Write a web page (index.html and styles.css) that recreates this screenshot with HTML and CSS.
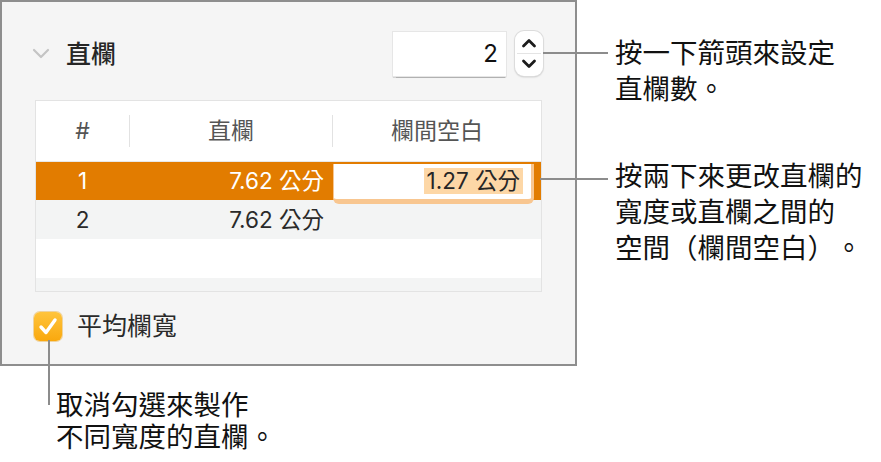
FILE: index.html
```html
<!DOCTYPE html>
<html lang="zh-Hant">
<head>
  <meta charset="UTF-8" />
  <title>直欄</title>
  <link rel="stylesheet" href="styles.css">
</head>
<body>
  <div class="figure">
    <div class="top">
      <section class="panel">
        <div class="panel-head">
          <svg class="disclosure" width="18" height="11" viewBox="0 0 18 11"><path d="M2 2 L9 9 L16 2" fill="none" stroke="#c4c4c4" stroke-width="2.2" stroke-linecap="round" stroke-linejoin="round"/></svg>
          <h2 class="panel-title">直欄</h2>
          <div class="count-field">2</div>
          <div class="stepper">
            <svg width="28" height="45" viewBox="0 0 28 45">
              <line x1="2" y1="22.5" x2="26" y2="22.5" stroke="#e4e4e4" stroke-width="1"/>
              <path d="M8.5 15 L14 9.5 L19.5 15" fill="none" stroke="#1c1c1c" stroke-width="2.8" stroke-linecap="round" stroke-linejoin="round"/>
              <path d="M8.5 30 L14 35.5 L19.5 30" fill="none" stroke="#1c1c1c" stroke-width="2.8" stroke-linecap="round" stroke-linejoin="round"/>
            </svg>
          </div>
        </div>

        <div class="columns-table">
          <div class="row head">
            <div class="cell num"><span>#</span></div>
            <div class="cell sep"><span>直欄</span></div>
            <div class="cell sep"><span>欄間空白</span></div>
          </div>
          <div class="row selected">
            <div class="cell num">1</div>
            <div class="cell val">7.62 公分</div>
            <div class="cell edit-cell">
              <div class="edit-box"><span class="hilite">1.27 公分</span></div>
            </div>
          </div>
          <div class="row alt">
            <div class="cell num">2</div>
            <div class="cell val">7.62 公分</div>
            <div class="cell"></div>
          </div>
          <div class="row"></div>
          <div class="row alt stub"></div>
        </div>

        <label class="check-row">
          <span class="checkbox">
            <svg width="28" height="29" viewBox="0 0 28 29"><path d="M7 15 L12 20.5 L21 8" fill="none" stroke="#fff" stroke-width="3.4" stroke-linecap="round" stroke-linejoin="round"/></svg>
          </span>
          <span class="check-label">平均欄寬</span>
        </label>
      </section>

      <div class="notes">
        <p class="note note-count">按一下箭頭來設定<br>直欄數。</p>
        <p class="note note-width">按兩下來更改直欄的<br>寬度或直欄之間的<br>空間（欄間空白）。</p>
      </div>
    </div>

    <p class="note note-equal">取消勾選來製作<br>不同寬度的直欄。</p>

    <!-- leader lines -->
    <span class="leader lead-count"></span>
    <span class="leader lead-width"></span>
    <span class="leader lead-equal"></span>
  </div>
</body>
</html>
```

FILE: styles.css
```css
* { box-sizing: border-box; margin: 0; padding: 0; }
body {
  background: #fff;
  font-family: Inter, "Noto Sans CJK TC", sans-serif;
  color: #1a1a1a;
  width: 881px;
  height: 462px;
  overflow: hidden;
}

.figure {
  position: relative;
  width: 881px;
  height: 462px;
}
.top {
  display: flex;
}

/* inspector panel */
.panel {
  width: 577px;
  height: 366px;
  background: #f5f5f5;
  border: 2px solid #8e8e8e;
  flex-shrink: 0;
}
.panel-head {
  display: flex;
  align-items: center;
  height: 45px;
  margin-top: 29px;
  padding: 0 32px 0 30px;
}
.disclosure { display: block; }
.panel-title {
  margin-left: 16px;
  font-size: 25px;
  font-weight: 500;
  line-height: 30px;
  color: #262626;
}
.count-field {
  margin-left: auto;
  width: 113px;
  height: 44px;
  background: #fff;
  box-shadow: 0 0 0 1px #e6e6e6, 0 1.5px 1px rgba(0,0,0,0.28);
  font-size: 24px;
  line-height: 44px;
  text-align: right;
  padding-right: 8px;
  color: #111;
}
.stepper {
  width: 28px;
  height: 45px;
  margin-left: 9px;
  background: #fff;
  border-radius: 9px;
  box-shadow: 0 0 0 1px #dcdcdc, 0 1px 2px rgba(0,0,0,0.25);
}
.stepper svg { display: block; }

/* columns table */
.columns-table {
  width: 507px;
  margin: 24px 0 0 33px;
  border: 1px solid #e3e3e3;
  background: #fff;
}
.row {
  display: grid;
  grid-template-columns: 93px 203px 1fr;
  height: 39px;
  font-size: 22.5px;
  line-height: 39px;
  color: #2a2a2a;
}
.row.head {
  height: 61px;
  border-bottom: 1px solid #e8e8e8;
  align-items: center;
  color: #555;
  font-size: 23px;
}
.row.head .cell {
  height: 32px;
  line-height: 32px;
  text-align: center;
}
.row.head .sep { border-left: 1px solid #e2e2e2; }
.row.selected {
  height: 38px;
  line-height: 38px;
  background: #e27c00;
  color: #fff;
}
.row.alt { background: #f3f4f4; }
.row.stub { height: 13px; }
.cell.num { text-align: center; }
.cell.val { text-align: right; padding-right: 8px; }

.edit-cell { position: relative; }
.edit-box {
  position: absolute;
  left: 1px;
  top: 2px;
  width: 201px;
  height: 40px;
  background: #fff;
  border: solid #f8c690;
  border-width: 0 3px 5px 1px;
  border-radius: 0 0 6px 6px;
  text-align: right;
  padding-right: 8px;
  color: #262626;
  line-height: 35px;
}
.hilite {
  display: inline-block;
  background: #fdd7a6;
  line-height: 26px;
  padding: 0 3px;
  vertical-align: 1px;
}

/* checkbox */
.check-row {
  display: flex;
  align-items: center;
  margin: 20px 0 0 32px;
  height: 29px;
}
.checkbox {
  width: 28px;
  height: 29px;
  border-radius: 6px;
  background: linear-gradient(#ffc43c, #f9a80e);
  box-shadow: 0 0 0 1px rgba(226,150,0,0.35);
}
.checkbox svg { display: block; }
.check-label {
  margin-left: 15px;
  font-size: 25px;
  line-height: 29px;
  color: #2a2a2a;
}

/* callouts */
.notes {
  margin-left: 38px;
  padding-top: 33px;
}
.note {
  font-family: "Noto Sans CJK TC", sans-serif;
  font-size: 27.5px;
  line-height: 36px;
  color: #111;
  white-space: nowrap;
  text-spacing-trim: space-all;
}
.note-width { margin-top: 51px; }
.note-equal {
  margin: 21px 0 0 56px;
  line-height: 32px;
}

.leader {
  position: absolute;
  background: #8c8c8c;
}
.lead-count { left: 543px; top: 52px; width: 65px; height: 2px; }
.lead-width { left: 540px; top: 178px; width: 68px; height: 2px; }
.lead-equal { left: 48px; top: 340px; width: 2px; height: 65px; }
```
